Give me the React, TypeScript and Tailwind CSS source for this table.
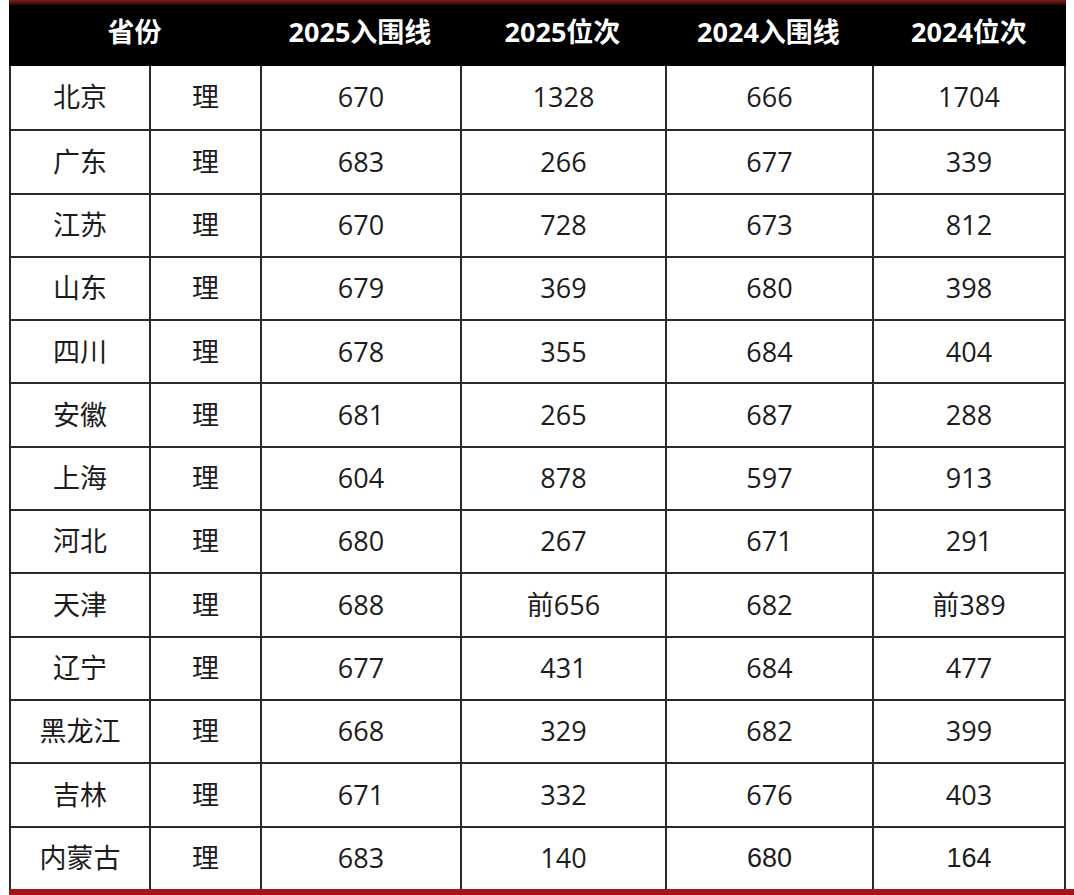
const rows: [string, string, string, string, string][] = [
  ['北京', '670', '1328', '666', '1704'],
  ['广东', '683', '266', '677', '339'],
  ['江苏', '670', '728', '673', '812'],
  ['山东', '679', '369', '680', '398'],
  ['四川', '678', '355', '684', '404'],
  ['安徽', '681', '265', '687', '288'],
  ['上海', '604', '878', '597', '913'],
  ['河北', '680', '267', '671', '291'],
  ['天津', '688', '前656', '682', '前389'],
  ['辽宁', '677', '431', '684', '477'],
  ['黑龙江', '668', '329', '682', '399'],
  ['吉林', '671', '332', '676', '403'],
  ['内蒙古', '683', '140', '680', '164'],
];

const font = { fontFamily: '"Open Sans", "Noto Sans CJK SC", sans-serif' };
const arial = { fontFamily: '"Liberation Sans", "Noto Sans CJK SC", sans-serif' };

export default function App() {
  return (
    <div className="w-[1074px] h-[895px] bg-white overflow-hidden" style={font}>
      <div className="h-[5px] ml-[9px] w-[1057px] bg-gradient-to-b from-[#7a1e1e] to-[#2a0808]" />
      <div className="ml-[9px] w-[1057px]">
        <div className="grid grid-cols-[251px_200px_205px_207px_194px] h-[61px] pb-[6px] bg-black text-white font-bold text-[27px] items-center">
          <div className="text-center">省份</div>
          <div className="text-center">2025入围线</div>
          <div className="text-center">2025位次</div>
          <div className="text-center">2024入围线</div>
          <div className="text-center">2024位次</div>
        </div>
        <div className="border-l-2 border-r-2 border-[#2a2a2a]">
          {rows.map((r, i) => {
            const last = i === rows.length - 1;
            return (
              <div
                key={i}
                className={`grid grid-cols-[138px_111px_200px_205px_207px_192px] h-[63.3px] text-[27px] text-[#1c1c1c] ${
                  i === 0 ? '' : 'border-t-2 border-[#2a2a2a]'
                }`}
              >
                <div className="flex items-center justify-center">{r[0]}</div>
                <div className="flex items-center justify-center border-l-2 border-[#2a2a2a]">理</div>
                <div className="flex items-center justify-center border-l-2 border-[#2a2a2a]">{r[1]}</div>
                <div className="flex items-center justify-center border-l-2 border-[#2a2a2a]">{r[2]}</div>
                <div className="flex items-center justify-center border-l-2 border-[#2a2a2a]" style={last ? arial : undefined}>
                  {r[3]}
                </div>
                <div className="flex items-center justify-center border-l-2 border-[#2a2a2a]" style={last ? arial : undefined}>
                  {r[4]}
                </div>
              </div>
            );
          })}
        </div>
      </div>
      <div className="ml-[9px] h-[8px] w-[1090px] bg-[#a5161a]" />
    </div>
  );
}
